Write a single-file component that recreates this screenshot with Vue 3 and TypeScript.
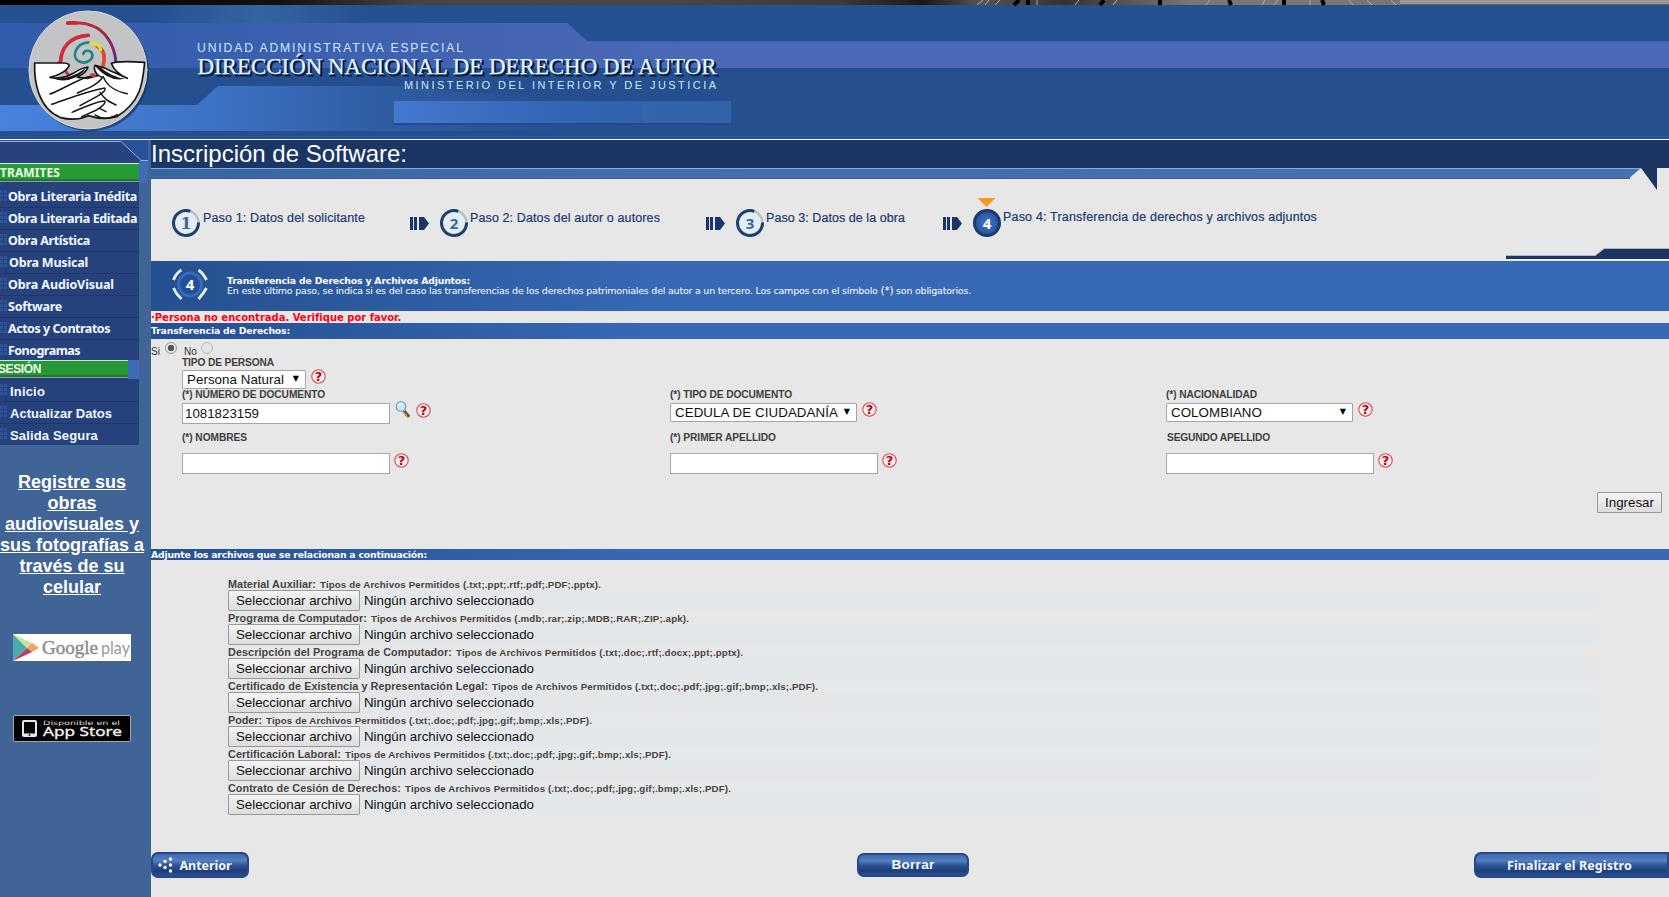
<script setup lang="ts">
import { ref } from 'vue'

interface UploadRow { label: string; types: string; w1: number; w2: number }

const tramites = [
  { t: 'Obra Literaria Inédita', x: 8, w: 129 },
  { t: 'Obra Literaria Editada', x: 8, w: 129 },
  { t: 'Obra Artística', x: 8, w: 82 },
  { t: 'Obra Musical', x: 9, w: 79 },
  { t: 'Obra AudioVisual', x: 8, w: 106 },
  { t: 'Software', x: 8, w: 54 },
  { t: 'Actos y Contratos', x: 8, w: 102 },
  { t: 'Fonogramas', x: 8, w: 72 },
]
const sesion = [
  { t: 'Inicio', w: 35 },
  { t: 'Actualizar Datos', w: 102 },
  { t: 'Salida Segura', w: 88 },
]
const uploads: UploadRow[] = [
  { label: 'Material Auxiliar:', types: '(.txt;.ppt;.rtf;.pdf;.PDF;.pptx).', w1: 88, w2: 281 },
  { label: 'Programa de Computador:', types: '(.mdb;.rar;.zip;.MDB;.RAR;.ZIP;.apk).', w1: 139, w2: 318 },
  { label: 'Descripción del Programa de Computador:', types: '(.txt;.doc;.rtf;.docx;.ppt;.pptx).', w1: 224, w2: 287 },
  { label: 'Certificado de Existencia y Representación Legal:', types: '(.txt;.doc;.pdf;.jpg;.gif;.bmp;.xls;.PDF).', w1: 260, w2: 326 },
  { label: 'Poder:', types: '(.txt;.doc;.pdf;.jpg;.gif;.bmp;.xls;.PDF).', w1: 34, w2: 326 },
  { label: 'Certificación Laboral:', types: '(.txt;.doc;.pdf;.jpg;.gif;.bmp;.xls;.PDF).', w1: 113, w2: 326 },
  { label: 'Contrato de Cesión de Derechos:', types: '(.txt;.doc;.pdf;.jpg;.gif;.bmp;.xls;.PDF).', w1: 173, w2: 326 },
]
const documento = ref('1081823159')

/* Spreads the letters of a one-line text over the given width in pixels. */
const vFit = {
  mounted(el: HTMLElement, binding: { value: number }) {
    const n = (el.textContent ?? '').trim().length
    const w = el.getBoundingClientRect().width
    el.style.letterSpacing = `${(binding.value - w) / n}px`
  },
}
</script>

<template>
  <div class="page">
    <svg class="header" width="1669" height="140" viewBox="0 0 1669 140">
      <defs>
        <linearGradient id="band" gradientUnits="userSpaceOnUse" x1="0" x2="700" y1="0" y2="0">
          <stop offset="0" stop-color="#305cab" /><stop offset=".5" stop-color="#3e61b0" /><stop offset="1" stop-color="#4b69b6" />
        </linearGradient>
        <linearGradient id="low" gradientUnits="userSpaceOnUse" x1="0" x2="560" y1="0" y2="0">
          <stop offset="0" stop-color="#4883df" /><stop offset=".4" stop-color="#3e71c2" /><stop offset=".68" stop-color="#305da2" /><stop offset="1" stop-color="#254f91" />
        </linearGradient>
        <linearGradient id="bar"><stop offset="0" stop-color="#4578d0" /><stop offset=".5" stop-color="#3465b3" /><stop offset="1" stop-color="#2f5ea4" /></linearGradient>
        <linearGradient id="glow"><stop offset="0" stop-color="#3465a0" stop-opacity="0" /><stop offset=".5" stop-color="#3465a0" /><stop offset="1" stop-color="#3465a0" stop-opacity="0" /></linearGradient>
        <linearGradient id="photo"><stop offset="0" stop-color="#000" /><stop offset=".2" stop-color="#111" /><stop offset=".3" stop-color="#454545" /><stop offset=".47" stop-color="#484848" /><stop offset=".6" stop-color="#3a3a3a" /><stop offset=".66" stop-color="#181818" /><stop offset=".7" stop-color="#555" /><stop offset=".76" stop-color="#333" /><stop offset=".85" stop-color="#777" /></linearGradient>
        <linearGradient id="swirl" x1="0" x2="1" y1="0" y2="1"><stop offset="0" stop-color="#d22b35" /><stop offset=".5" stop-color="#a02b45" /><stop offset="1" stop-color="#5b2b8c" /></linearGradient>
      </defs>
      <rect width="1669" height="140" fill="#255092" />
      <rect width="1400" height="5" fill="url(#photo)" />
      <rect x="1400" width="269" height="5" fill="#999" />
      <rect x="1400" y="4" width="269" height="1" fill="#666" />
      <path d="M977 5L983 0M985 5L989 0M995 5L1000 0M1037 5V0M1075 5L1079 0M1113 5L1117 0M1206 5L1210 0M1262 5L1265 0M1274 5L1278 0M1310 5V0M1353 5L1349 0M1372 5L1367 0M1396 5L1391 0" stroke="#aaa" />
      <path d="M1014 5L1019 0M1028 5V0M1100 5L1104 0M1160 5V0M1231 5L1229 0M1284 5V0M1324 5L1322 0" stroke="#000" stroke-width="4" />
      <rect x="150" y="5" width="220" height="18" fill="url(#glow)" />
      <path d="M0 23H567L587 41H1669V68H0Z" fill="url(#band)" />
      <path d="M587 41.5H1669" stroke="#3862ab" />
      <rect y="68" width="1669" height="71" fill="#254f8e" />
      <path d="M0 105H197L218 86H394L560 100V131H0Z" fill="url(#low)" />
      <rect x="394" y="123" width="337" height="2" fill="#244a91" />
      <rect x="394" y="101" width="337" height="22" fill="url(#bar)" />
      <rect x="643" y="101" width="88" height="22" fill="#3868ad" opacity=".45" />
      <rect y="131" width="1669" height="8" fill="#25508f" />
      <rect y="136" width="1669" height="1" fill="#2d58a1" />
      <rect y="139" width="1669" height="1" fill="#fff" />

      <g transform="scale(.33333)" fill="none" stroke-linecap="round" stroke-linejoin="round">
        <circle cx="270" cy="217" r="177" fill="#1a3562" opacity=".75" />
        <circle cx="264" cy="210" r="177" fill="#c3c4c6" stroke="#d5d8da" stroke-width="3" />
        <path d="M203 69C225 68 250 66 275 77C310 88 345 130 348 190" stroke="url(#swirl)" stroke-width="9" />
        <path d="M203 69H228" stroke="#c92631" stroke-width="11" />
        <path d="M182 187C182 145 210 108 265 106" stroke="#d52b35" stroke-width="11" />
        <path d="M178 187L205 225" stroke="#c52a55" stroke-width="9" />
        <path d="M292 139C315 150 315 175 309 197" stroke="#e4452d" stroke-width="11" />
        <path d="M265 128C285 128 300 135 302 149" stroke="#e4df36" stroke-width="9" />
        <path d="M265 127C224 131 215 172 236 184C260 195 282 178 276 160C270 150 252 149 250 162" stroke="#1b868a" stroke-width="8" />
        <path d="M104 189H190Q212 190 206 200Q195 221 150 232Q185 240 220 220Q245 203 264 201Q260 217 232 232L262 235L294 226Q278 207 285 196Q312 201 334 214L382 235Q345 220 334 190Q350 182 434 187C428 245 425 305 350 350Q310 362 265 347Q225 365 180 352C115 325 102 245 104 189Z" fill="#fff" stroke="#161616" stroke-width="5" />
        <path d="M150 282C175 275 220 245 262 231L294 226L307 232Q300 246 270 262L232 279M155 313C195 300 255 275 314 264Q322 270 290 290L240 317M216 337C245 325 290 303 314 303Q320 310 290 330L245 350M310 230C320 258 350 275 382 281M300 277C320 305 330 305 348 315M300 326L318 335M285 345Q315 365 352 344" stroke="#161616" stroke-width="4.5" />
        <path d="M250 216Q205 255 158 235Q210 240 258 204ZM285 198Q330 250 380 235Q345 238 295 198Z" fill="#161616" />
        <path d="M268 222L284 219 288 229 279 233Z" fill="#cf3439" />
      </g>

      <g class="sans" fill="#c9eafd">
        <text x="197" y="51.5" font-size="12.2" textLength="266">UNIDAD ADMINISTRATIVA ESPECIAL</text>
        <text x="404" y="88.500" font-size="11" textLength="312">MINISTERIO DEL INTERIOR Y DE JUSTICIA</text>
      </g>
      <g class="serif" font-size="22.5">
        <text x="199.5" y="75.5" fill="#0b1c3c" stroke="#0b1c3c" stroke-width=".8" textLength="519" lengthAdjust="spacingAndGlyphs">DIRECCIÓN NACIONAL DE DERECHO DE AUTOR</text>
        <text x="197.5" y="74" fill="#e3f6ff" stroke="#e3f6ff" stroke-width=".25" textLength="519" lengthAdjust="spacingAndGlyphs">DIRECCIÓN NACIONAL DE DERECHO DE AUTOR</text>
      </g>
    </svg>

    <div class="body">
      <aside class="side">
        <svg class="cap" width="148" height="23" viewBox="0 0 148 23">
          <rect width="148" height="23" fill="#28529b" />
          <path d="M0 1H121L141 20H139V23H0Z" fill="#27427f" />
          <path d="M0 1.5H121L141 20.500H148" fill="none" stroke="#84b3e8" />
          <rect x="139" y="21" width="9" height="2" fill="#3f6ab3" />
        </svg>
        <div class="green"><span v-fit="60" class="gtext">TRAMITES</span></div>
        <nav class="menu">
          <a v-for="m in tramites" :key="m.t" :style="{ paddingLeft: m.x + 'px' }"><i class="dots"></i><span v-fit="m.w">{{ m.t }}</span></a>
        </nav>
        <div class="green session"><span v-fit="43" class="gtext sans">SESIÓN</span></div>
        <nav class="menu sans account">
          <a v-for="m in sesion" :key="m.t"><i class="dots"></i><span v-fit="m.w">{{ m.t }}</span></a>
        </nav>
        <a class="promo">Registre sus<br />obras<br />audiovisuales y<br />sus fotografías a<br />través de su<br />celular</a>
        <svg class="store" width="118" height="27" viewBox="0 0 118 27">
          <rect width="118" height="27" fill="#fff" />
          <path d="M0 0L14 14 0 27Z" fill="#4ba9b0" />
          <path d="M0 0L19 9 14 14Z" fill="#c4e59a" />
          <path d="M19 9L26 14 19 18 14 14Z" fill="#f3a35f" />
          <path d="M0 27L14 14 19 18Z" fill="#bd3c65" />
          <text class="serif" x="29" y="19.500" font-size="18" fill="#8b8b8b" stroke="#8b8b8b" stroke-width=".4" textLength="56" lengthAdjust="spacingAndGlyphs">Google</text>
          <text class="lato" x="88" y="20" font-size="18" fill="#999" textLength="29" lengthAdjust="spacingAndGlyphs">play</text>
        </svg>
        <svg class="store second" width="118" height="27" viewBox="0 0 118 27">
          <rect x=".5" y=".5" width="117" height="26" rx="1.500" fill="#020202" stroke="#a4a6a8" />
          <rect x="9" y="5" width="15" height="17" rx="2" fill="#e8e8e8" />
          <rect x="11" y="7" width="11" height="11.500" fill="#050505" />
          <circle cx="16.500" cy="20" r="1" fill="#222" />
          <text class="wide" x="30" y="9.500" font-size="6" fill="#ddd" textLength="77" lengthAdjust="spacingAndGlyphs">Disponible en el</text>
          <text class="noto" x="30" y="21" font-size="13" fill="#f0f0f0" stroke="#f0f0f0" stroke-width=".35" textLength="79" lengthAdjust="spacingAndGlyphs">App Store</text>
        </svg>
      </aside>

      <main class="main">
        <h1 class="title"><span v-fit="256">Inscripción de Software:</span></h1>
        <svg class="ribbon" width="1518" height="24" viewBox="0 0 1518 24">
          <defs><linearGradient id="rib"><stop offset="0" stop-color="#37659d" /><stop offset=".3" stop-color="#426fab" /><stop offset="1" stop-color="#4472b0" /></linearGradient></defs>
          <path d="M0 0H1490L1479 9.500V11H0Z" fill="url(#rib)" />
          <path d="M0 .5H1490" stroke="#83aee0" />
          <path d="M0 10.500H1479" stroke="#365e8e" />
          <path d="M1490 0H1506V22Z" fill="#1b3564" />
        </svg>

        <div class="steps">
          <div class="step s1">
            <svg class="ring" width="28" height="28" viewBox="0 0 28 28"><circle cx="14" cy="14" r="12.500" fill="#e4ecf4" stroke="#b9bfc6" stroke-width="2.500" /><path d="M18.300 2.300A12.500 12.500 0 1 0 26.500 13.500" fill="none" stroke="#20416f" stroke-width="3" /><text class="slab" x="14" y="19.500" text-anchor="middle">1</text></svg>
            <span v-fit="162">Paso 1: Datos del solicitante</span>
          </div>
          <svg class="arrow" width="19" height="13" viewBox="0 0 19 13"><path d="M0 0H3V13H0ZM4 0H7V13H4ZM9 0H14L19 6.500 14 13H9Z" fill="#1b3469" /></svg>
          <div class="step s2">
            <svg class="ring" width="28" height="28" viewBox="0 0 28 28"><circle cx="14" cy="14" r="12.500" fill="#e4ecf4" stroke="#b9bfc6" stroke-width="2.500" /><path d="M18.300 2.300A12.500 12.500 0 1 0 26.500 13.500" fill="none" stroke="#20416f" stroke-width="3" /><text class="num" x="14" y="19.500" text-anchor="middle">2</text></svg>
            <span v-fit="190">Paso 2: Datos del autor o autores</span>
          </div>
          <svg class="arrow" width="19" height="13" viewBox="0 0 19 13"><path d="M0 0H3V13H0ZM4 0H7V13H4ZM9 0H14L19 6.500 14 13H9Z" fill="#1b3469" /></svg>
          <div class="step s3">
            <svg class="ring" width="28" height="28" viewBox="0 0 28 28"><circle cx="14" cy="14" r="12.500" fill="#e4ecf4" stroke="#b9bfc6" stroke-width="2.500" /><path d="M18.300 2.300A12.500 12.500 0 1 0 26.500 13.500" fill="none" stroke="#20416f" stroke-width="3" /><text class="num" x="14" y="19.500" text-anchor="middle">3</text></svg>
            <span v-fit="139">Paso 3: Datos de la obra</span>
          </div>
          <svg class="arrow" width="19" height="13" viewBox="0 0 19 13"><path d="M0 0H3V13H0ZM4 0H7V13H4ZM9 0H14L19 6.500 14 13H9Z" fill="#1b3469" /></svg>
          <div class="step s4">
            <svg class="current" width="28" height="39" viewBox="0 0 28 39"><defs><radialGradient id="ball"><stop offset="0" stop-color="#3f74c8" /><stop offset="1" stop-color="#28539d" /></radialGradient></defs><path d="M4.500 0H22.500L13.500 9Z" fill="#f89a1d" /><circle cx="14" cy="25" r="12.500" fill="url(#ball)" stroke="#1b3a70" stroke-width="3" /><text class="num white" x="14" y="30.500" text-anchor="middle">4</text></svg>
            <span v-fit="314">Paso 4: Transferencia de derechos y archivos adjuntos</span>
          </div>
          <svg class="notch" width="163" height="13" viewBox="0 0 163 13"><path d="M0 8H89L98 1H163V11H0Z" fill="#1b3564" /><path d="M0 7.500H89L98 .5H163" fill="none" stroke="#a9b9c8" /><path d="M0 11.500H163" stroke="#f2efe9" /></svg>
        </div>

        <section class="banner">
          <svg width="36" height="32" viewBox="0 0 36 32">
            <circle cx="18" cy="15.500" r="11.500" fill="#24509a" stroke="#356bb9" stroke-width="3" />
            <path d="M1.500 11Q4 4 9.500 1M26.500 1Q31 4 34.500 11M1.500 19Q4 25 9.500 30M34.500 19Q31 25 26.500 30" fill="none" stroke="#e8eef4" stroke-width="2.800" />
            <text class="num white" x="18" y="20.500" text-anchor="middle">4</text>
          </svg>
          <div class="btext">
            <div><b v-fit="243">Transferencia de Derechos y Archivos Adjuntos:</b></div>
            <div><span v-fit="744">En este último paso, se indica si es del caso las transferencias de los derechos patrimoniales del autor a un tercero. Los campos con el símbolo <span class="star">(*)</span> son obligatorios.</span></div>
          </div>
        </section>
        <div class="error"><span v-fit="250">·Persona no encontrada. Verifique por favor.</span></div>
        <h2 class="bar"><span v-fit="139">Transferencia de Derechos:</span></h2>

        <form class="form">
          <div class="yesno">
            <span>Si</span><i class="radio on"></i><span class="no">No</span><i class="radio"></i>
          </div>
          <div class="field person">
            <label v-fit="92">TIPO DE PERSONA</label>
            <div class="ctl"><div class="select w124"><span v-fit="97">Persona Natural</span><i class="caret">▼</i></div>
              <svg class="help" width="15" height="15" viewBox="0 0 15 15"><circle cx="7.500" cy="7.500" r="6.700" /><text x="7.500" y="12" text-anchor="middle">?</text></svg></div>
          </div>
          <div class="cols">
            <div class="field">
              <label v-fit="143">(*) NÚMERO DE DOCUMENTO</label>
              <div class="ctl"><div class="input"><span v-fit="74">{{ documento }}</span></div>
                <svg class="lens" width="16" height="18" viewBox="0 0 16 18"><path d="M9 10L14 16" stroke="#555" stroke-width="3.500" /><path d="M8.500 11L13 16.500" stroke="#d88933" stroke-width="1.500" /><circle cx="6" cy="5.500" r="4.800" fill="#c8eafc" stroke="#7d9fb6" stroke-width="1.300" /><path d="M3 4Q5 2 8 3" stroke="#fff" fill="none" /></svg>
                <svg class="help far" width="15" height="15" viewBox="0 0 15 15"><circle cx="7.500" cy="7.500" r="6.700" /><text x="7.500" y="12" text-anchor="middle">?</text></svg></div>
            </div>
            <div class="field">
              <label v-fit="122">(*) TIPO DE DOCUMENTO</label>
              <div class="ctl"><div class="select"><span v-fit="163">CEDULA DE CIUDADANÍA</span><i class="caret">▼</i></div>
                <svg class="help" width="15" height="15" viewBox="0 0 15 15"><circle cx="7.500" cy="7.500" r="6.700" /><text x="7.500" y="12" text-anchor="middle">?</text></svg></div>
            </div>
            <div class="field">
              <label v-fit="91">(*) NACIONALIDAD</label>
              <div class="ctl"><div class="select"><span v-fit="91">COLOMBIANO</span><i class="caret">▼</i></div>
                <svg class="help" width="15" height="15" viewBox="0 0 15 15"><circle cx="7.500" cy="7.500" r="6.700" /><text x="7.500" y="12" text-anchor="middle">?</text></svg></div>
            </div>
          </div>
          <div class="cols names">
            <div class="field">
              <label v-fit="65">(*) NOMBRES</label>
              <div class="ctl"><div class="input"></div>
                <svg class="help near" width="15" height="15" viewBox="0 0 15 15"><circle cx="7.500" cy="7.500" r="6.700" /><text x="7.500" y="12" text-anchor="middle">?</text></svg></div>
            </div>
            <div class="field">
              <label v-fit="106">(*) PRIMER APELLIDO</label>
              <div class="ctl"><div class="input"></div>
                <svg class="help near" width="15" height="15" viewBox="0 0 15 15"><circle cx="7.500" cy="7.500" r="6.700" /><text x="7.500" y="12" text-anchor="middle">?</text></svg></div>
            </div>
            <div class="field">
              <label v-fit="104" class="seg">SEGUNDO APELLIDO</label>
              <div class="ctl"><div class="input"></div>
                <svg class="help near" width="15" height="15" viewBox="0 0 15 15"><circle cx="7.500" cy="7.500" r="6.700" /><text x="7.500" y="12" text-anchor="middle">?</text></svg></div>
            </div>
          </div>
          <div class="submit"><button type="button" class="btn ingresar"><span v-fit="49">Ingresar</span></button></div>
        </form>

        <h2 class="bar thin"><span v-fit="276">Adjunte los archivos que se relacionan a continuación:</span></h2>
        <div class="files">
          <div v-for="u in uploads" :key="u.label" class="file">
            <div class="flabel"><b v-fit="u.w1">{{ u.label }}</b><b v-fit="u.w2" class="types">Tipos de Archivos Permitidos {{ u.types }}</b></div>
            <div class="fctl"><button type="button" class="btn pick"><span v-fit="116">Seleccionar archivo</span></button><span v-fit="170">Ningún archivo seleccionado</span></div>
          </div>
        </div>
        <footer class="actions">
          <button type="button" class="pill back"><svg width="15" height="16" viewBox="0 0 15 16" fill="#fff"><circle cx="2" cy="8" r="1.700" /><circle cx="7" cy="4.500" r="1.700" /><circle cx="7" cy="10.500" r="1.700" /><circle cx="12.500" cy="2" r="1.700" /><circle cx="12.500" cy="8" r="1.700" /><circle cx="12.500" cy="14" r="1.700" /></svg><span v-fit="52">Anterior</span></button>
          <button type="button" class="pill clear"><span v-fit="43">Borrar</span></button>
          <button type="button" class="pill finish"><span v-fit="125">Finalizar el Registro</span></button>
        </footer>
      </main>
    </div>
  </div>
</template>

<style>
body { margin: 0; overflow: hidden; background: #e7e7e7; }
</style>

<style scoped>
.page { width: 1669px; height: 897px; overflow: hidden; background: #e7e7e7; font-family: "Liberation Sans", Arial, sans-serif; color: #333; }
.header { display: block; }
.sans { font-family: "Liberation Sans", Arial, sans-serif; }
.serif { font-family: "Liberation Serif", "Times New Roman", serif; }
.lato { font-family: Lato, sans-serif; }
.noto { font-family: "Noto Sans", sans-serif; }
.wide { font-family: "DejaVu Sans", sans-serif; }
span, b, label { white-space: nowrap; }
.body { display: flex; height: 757px; }
.side { width: 151px; flex: none; background: #416497; display: flex; flex-direction: column; }
.cap { display: block; flex: none; }
.green { box-sizing: border-box; width: 148px; height: 20px; flex: none; border-right: 9px solid #3f6cb5; background: linear-gradient(#cfe9cf 0 1px, #269c39 1px 16px, #2a7431 16px 18px, #8b9aa0 18px 19px, #26427d 19px); display: flex; }
.gtext { font: bold 12px/20px "Noto Sans", sans-serif; color: #eefbe8; }
.gtext.sans { font: bold 12px/19px "Liberation Sans", sans-serif; margin-left: -2px; }
.session { width: 139px; border-right-width: 11px; height: 19px; background: linear-gradient(#cfe9cf 0 1px, #289639 1px 15px, #2a7431 15px 17px, #8b9aa0 17px 18px, #26427d 18px); }
.menu { width: 139px; flex: none; height: 177px; overflow: hidden; background: #26427d; font: bold 12.500px/22px "Noto Sans", sans-serif; color: #f2f8ff; padding-top: 3px; box-sizing: border-box; }
.menu a { position: relative; display: block; height: 22px; line-height: 21px; box-sizing: border-box; border-bottom: 1px solid #203768; }
.dots { position: absolute; left: 0; top: 4px; width: 7px; height: 12px; background: repeating-linear-gradient(90deg, transparent 0 3px, #26427d 3px 4px), repeating-linear-gradient(#2f5397 0 3px, #26427d 3px 4px); }
.account { height: 66px; padding-top: 1px; font: bold 13px/22px "Liberation Sans", sans-serif; }
.account a { padding-left: 10px; line-height: 23px; }
.promo { margin: 27px 0 0; width: 144px; height: 126px; text-align: center; font: bold 18px/21px "Liberation Sans", sans-serif; color: #fff; text-decoration: underline; white-space: nowrap; }
.store { display: block; margin: 36px 0 0 13px; flex: none; }
.store.second { margin-top: 54px; }
.main { width: 1518px; flex: none; }
.title { margin: 0; height: 28px; background: #1b3564; color: #fff; font: 24px/27px "Liberation Sans", Arial, sans-serif; }
.ribbon { display: block; height: 24px; }
.steps { height: 69px; display: flex; align-items: flex-start; padding-left: 21px; color: #1b3a70; font-size: 12.500px; -webkit-text-stroke: .2px #1b3a70; position: relative; }
.step { display: flex; gap: 3px; margin-top: 17px; }
.step span { margin-top: 2px; line-height: 14px; }
.s1 { width: 238px; } .s2 { width: 266px; margin-left: 11px; } .s3 { width: 207px; margin-left: 11px; } .s4 { margin: 6px 0 0 11px; gap: 2px; }
.s2, .s3 { gap: 2px; }
.s4 span { margin-top: 12px; }
.arrow { margin-top: 25px; flex: none; }
.ring, .current { flex: none; }
.slab { font: bold 16px "DejaVu Serif", serif; fill: #3a6796; stroke: none; }
.num { font: bold 15px "Noto Sans", sans-serif; fill: #3a6796; stroke: none; -webkit-text-stroke: 0; }
.slab { -webkit-text-stroke: 0; }
.num.white { fill: #fff; }
.notch { position: absolute; right: 0; bottom: 0; }
.banner { height: 50px; display: flex; background: linear-gradient(90deg, #25508f, #3869b5 520px); color: #fff; font: 9.500px/11px "DejaVu Sans", Verdana, sans-serif; box-sizing: border-box; padding: 8px 0 0 21px; }
.btext { margin: 6px 0 0 19px; }
.btext div { height: 11px; }
.btext div + div { margin-top: -1px; }
.btext b { font-family: "DejaVu Sans", sans-serif; font-size: 9.300px; }
.btext span { font-family: "DejaVu Sans", sans-serif; font-size: 9.500px; }
.btext .star { font-size: 10.500px; }
.error { height: 12px; color: #f01; font: bold 10px/14px "DejaVu Sans", Verdana, sans-serif; }
.bar { margin: 0; height: 16px; background: linear-gradient(90deg, #25508f, #3869b5 520px); color: #fff; font: bold 9.300px/16px "DejaVu Sans", sans-serif; }
.bar.thin { height: 11px; line-height: 12px; }
.form { height: 210px; }
.yesno { height: 19px; display: flex; font-size: 10px; line-height: 26px; align-items: flex-start; }
.radio { box-sizing: border-box; width: 12px; height: 12px; border: 1px solid #bbb; border-radius: 50%; margin: 3px 0 0 5px; background: #e4e4e4; flex: none; }
.radio.on { border-color: #999; background: radial-gradient(circle, #555 0 3px, #e4e4e4 3.500px); }
.no { margin-left: 7px; }
.no + .radio { margin-left: 4px; }
.field { display: flex; flex-direction: column; align-items: flex-start; }
.field label { font-weight: bold; font-size: 10.200px; line-height: 8px; height: 12px; color: #404040; }
.person { margin-left: 31px; height: 33px; padding-top: 1px; box-sizing: border-box; }
.person label { height: 11px; }
.ctl { display: flex; align-items: flex-start; }
.input, .select { box-sizing: border-box; background: #fff; border: 1px solid #a6a6a6; color: #111; font-size: 13.333px; white-space: nowrap; }
.input { width: 208px; height: 21px; padding-left: 2px; line-height: 19px; }
.select { width: 187px; height: 19px; padding: 0 6px 0 4px; border-radius: 1px; display: flex; justify-content: space-between; line-height: 18px; }
.w124 { width: 124px; }
.caret { font: normal 8px/16px "DejaVu Sans", sans-serif; color: #000; }
.help { margin: -1.500px 0 0 4.500px; flex: none; }
.help circle { fill: #f8eeee; stroke: #d0515a; stroke-width: 1.100; }
.help text { font: bold 13px "DejaVu Sans", sans-serif; fill: #c00010; }
.help.near { margin: 0 0 0 3.500px; }
.help.far { margin: -.5px 0 0 5px; }
.lens { margin: -2.500px 0 0 5px; }
.cols { display: grid; grid-template-columns: 488px 496px 1fr; margin-left: 31px; height: 43px; }
.cols label { margin-bottom: 0; }
.names { height: 58px; }
.names label { margin-bottom: 7px; }
.seg { padding-left: 1px; }
.submit { display: flex; justify-content: flex-end; padding-right: 7px; }
.btn { box-sizing: border-box; height: 21px; border: 1px solid #999; border-radius: 1px; background: linear-gradient(#f5f5f5, #dcdcdc); color: #111; font: 13.333px/18px "Liberation Sans", Arial, sans-serif; padding: 0; text-align: center; }
.ingresar { width: 65px; }
.files { margin: 18px 71px 0 77px; height: 238px; }
.file { height: 34px; }
.flabel { height: 12px; line-height: 12px; font-size: 10.800px; color: #444; display: flex; gap: 4px; }
.flabel .types { font-size: 9.700px; line-height: 13px; }
.fctl { height: 21px; background: #e3e7ea; display: flex; gap: 4px; font-size: 13.333px; line-height: 21px; color: #111; }
.pick { width: 132px; }
.actions { display: flex; justify-content: space-between; align-items: center; height: 26px; margin-top: 36px; }
.pill { box-sizing: border-box; height: 26px; padding: 0; border: 2px solid #24488a; border-radius: 7px; background: linear-gradient(#4068b0, #5580be 30%, #2e5599 50%, #1f3e78 78%, #284f92); color: #f4f8ff; font: bold 12.500px/20px "Noto Sans", sans-serif; display: flex; align-items: center; justify-content: center; }
.pill span { padding-top: 1px; }
.back { width: 98px; gap: 7px; padding-right: 11px; }
.clear { width: 112px; height: 24px; font-family: "Liberation Sans", sans-serif; font-size: 13.500px; margin-left: 103px; }
.clear span { padding-top: 0; }
.finish { width: 195px; border-radius: 7px 0 0 7px; padding-right: 4px; }
</style>
